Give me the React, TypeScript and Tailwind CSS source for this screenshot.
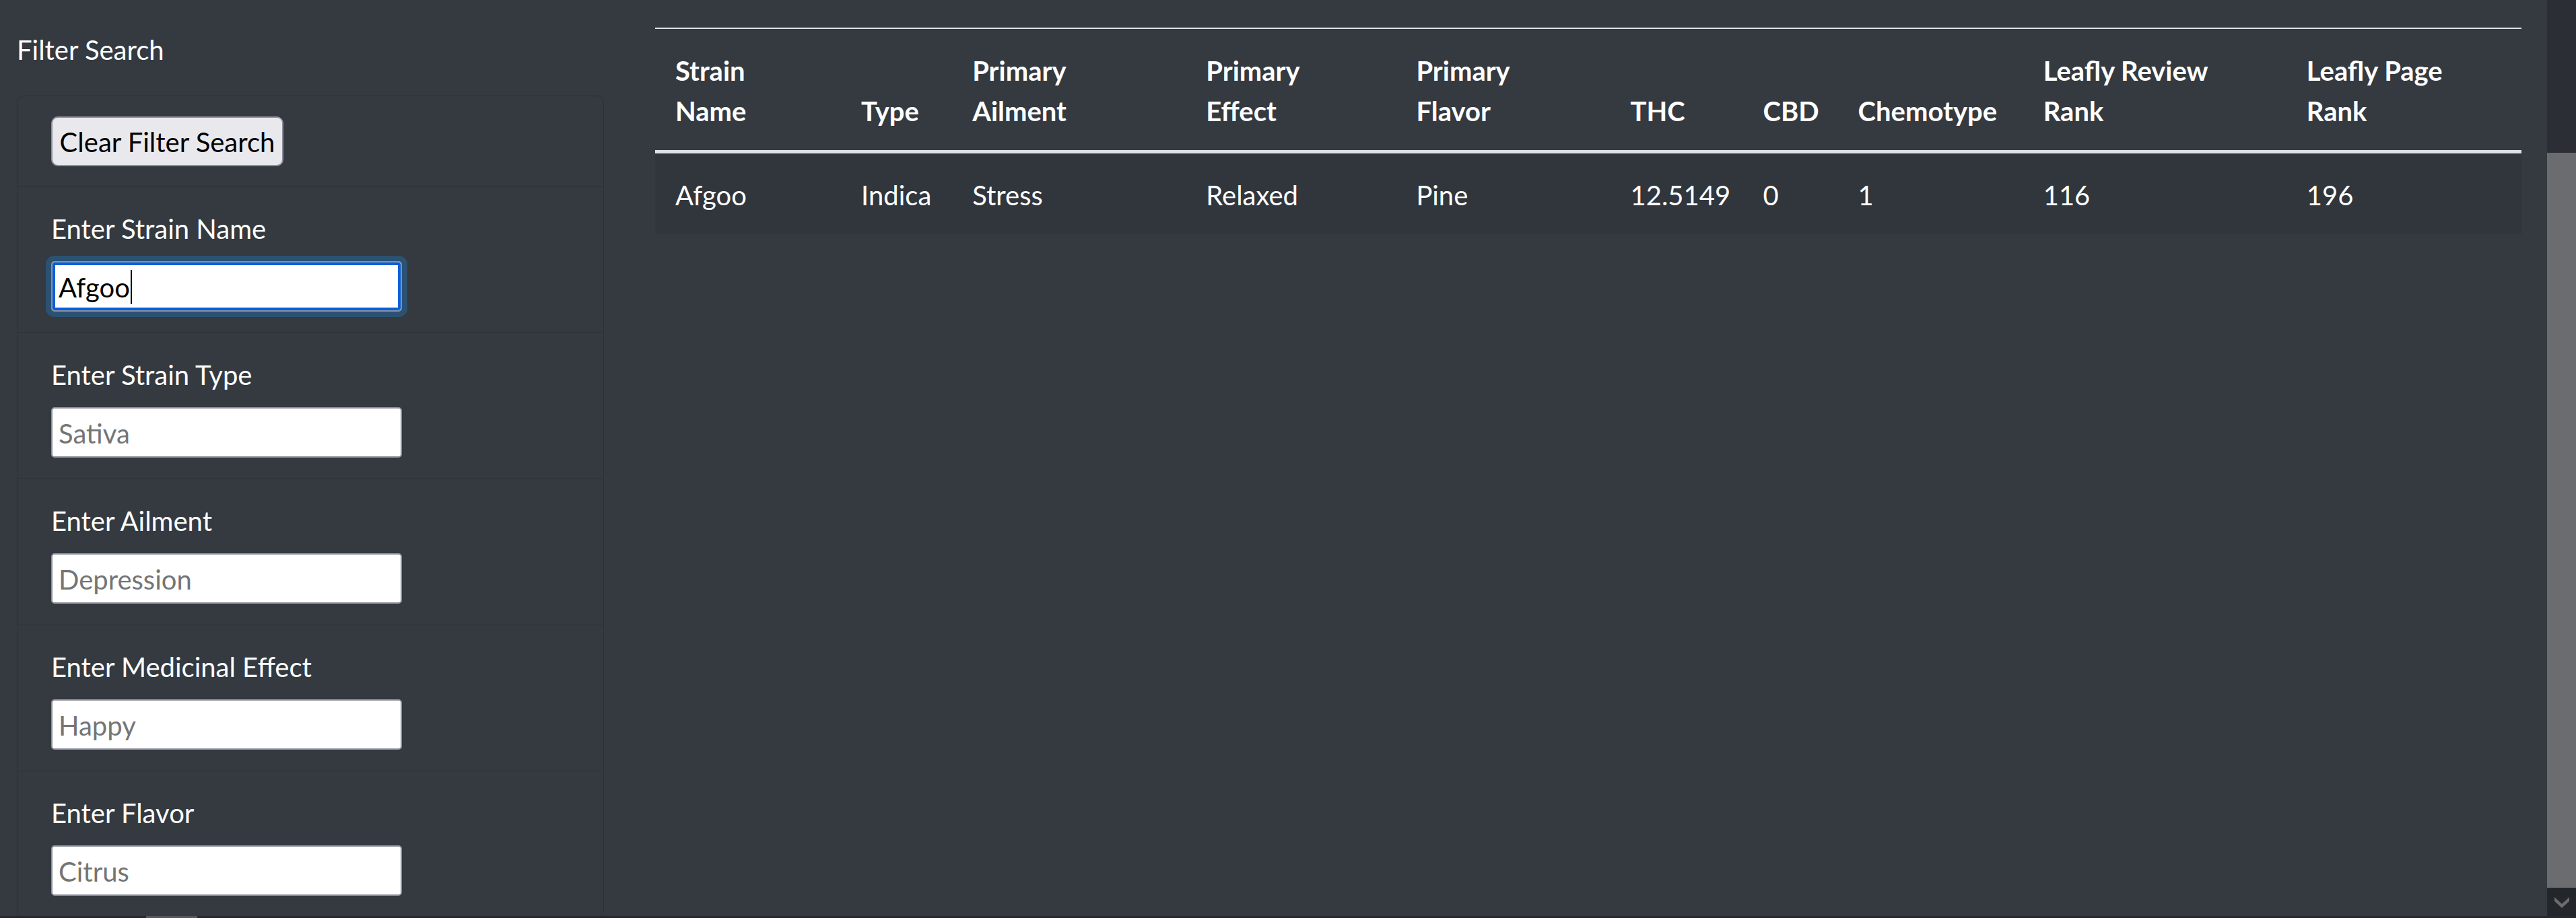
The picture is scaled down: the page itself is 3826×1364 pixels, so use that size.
import React from "react";

const fields = [
  { label: "Enter Strain Name", placeholder: "", value: "Afgoo", focused: true },
  { label: "Enter Strain Type", placeholder: "Sativa" },
  { label: "Enter Ailment", placeholder: "Depression" },
  { label: "Enter Medicinal Effect", placeholder: "Happy" },
  { label: "Enter Flavor", placeholder: "Citrus" },
];

const cols = [
  { w: 276, h: ["Strain", "Name"], v: "Afgoo" },
  { w: 165, h: ["Type"], v: "Indica" },
  { w: 347, h: ["Primary", "Ailment"], v: "Stress" },
  { w: 312, h: ["Primary", "Effect"], v: "Relaxed" },
  { w: 318, h: ["Primary", "Flavor"], v: "Pine" },
  { w: 197, h: ["THC"], v: "12.5149" },
  { w: 141, h: ["CBD"], v: "0" },
  { w: 275, h: ["Chemotype"], v: "1" },
  { w: 391, h: ["Leafly Review", "Rank"], v: "116" },
  { w: 349, h: ["Leafly Page", "Rank"], v: "196" },
];

export default function App() {
  return (
    <div
      className="w-full h-[1364px] overflow-hidden bg-[#343a40] text-white flex flex-col"
      style={{ fontFamily: '"Segoe UI", Lato, "Open Sans", sans-serif' }}
    >
      <div className="h-[1361px] flex">
        <div className="flex-1 flex min-w-0">
          {/* Left filter panel */}
          <div className="w-[897px] pl-[25px] pt-[44px] flex flex-col shrink-0">
            <div className="h-[60px] leading-[60px] text-[40px] mb-[38px]">Filter Search</div>
            <div className="w-[872px] border border-[#2c3136] rounded-[10px] flex flex-col">
              <div className="pt-[30px] pb-[30px] px-[50px] border-b border-[#2c3136]">
                <button className="w-[345px] h-[74px] bg-[#e9e9ed] border-2 border-[#8f8f9d] rounded-[10px] text-black text-[40px] leading-[60px] flex items-center justify-center pt-[2px]">
                  Clear Filter Search
                </button>
              </div>
              {fields.map((f, i) => (
                <div
                  key={f.label}
                  className={
                    "pt-[32px] pb-[31px] px-[50px] " +
                    (i < fields.length - 1 ? "border-b border-[#2c3136]" : "")
                  }
                >
                  <div className="text-[40px] leading-[60px] mb-[18px]">{f.label}</div>
                  {f.focused ? (
                    <div className="w-[521px] h-[75px] bg-white border-2 border-[#8f8f9d] rounded-[5px] shadow-[0_0_0_8px_#2b5272,inset_0_0_0_4px_#0060df] px-[9px] pt-[2px] flex items-center text-black text-[40px]">
                      <span>{f.value}</span>
                      <span className="w-[2px] h-[51px] bg-black ml-[1px]" />
                    </div>
                  ) : (
                    <input
                      readOnly
                      placeholder={f.placeholder}
                      className="w-[521px] h-[75px] bg-white border-2 border-[#8f8f9d] rounded-[5px] px-[9px] pt-[3px] text-black text-[40px] placeholder:text-[#757575] outline-none"
                      style={{ fontFamily: '"Segoe UI", Lato, "Open Sans", sans-serif' }}
                    />
                  )}
                </div>
              ))}
            </div>
          </div>

          {/* Table */}
          <div className="flex-1 pl-[76px] pr-[38px] pt-[41px] min-w-0">
            <table className="w-[2772px] table-fixed border-separate border-spacing-0 text-[40px] leading-[60px]">
              <colgroup>
                {cols.map((c) => (
                  <col key={c.h.join(" ")} style={{ width: c.w }} />
                ))}
              </colgroup>
              <thead>
                <tr>
                  {cols.map((c) => (
                    <th
                      key={c.h.join(" ")}
                      className="text-left align-bottom font-bold px-[30px] pt-[32px] pb-[28px] border-t-2 border-b-[5px] border-[#dee2e6] whitespace-nowrap"
                    >
                      {c.h.map((line, i) => (
                        <div key={i}>{line}</div>
                      ))}
                    </th>
                  ))}
                </tr>
              </thead>
              <tbody>
                <tr className="bg-[#31363c]">
                  {cols.map((c) => (
                    <td key={c.h.join(" ")} className="px-[30px] pt-[32px] pb-[28px] align-top whitespace-nowrap">
                      {c.v}
                    </td>
                  ))}
                </tr>
              </tbody>
            </table>
          </div>
        </div>

        {/* Vertical scrollbar */}
        <div className="w-[43px] shrink-0 flex flex-col bg-[#2b2f35]">
          <div className="h-[227px]" />
          <div className="h-[1092px] bg-[#6b6c70]" />
          <div className="flex-1 bg-[#23262b] flex items-center justify-center">
            <svg width="22" height="18" viewBox="0 0 22 18">
              <path d="M0 2 L11 12 L22 2 L22 8 L11 18 L0 8 Z" fill="#6b6c70" />
            </svg>
          </div>
        </div>
      </div>

      {/* Bottom horizontal scrollbar strip */}
      <div className="h-[3px] bg-[#25282d] flex">
        <div className="w-[217px]" />
        <div className="w-[76px] bg-[#55585d]" />
      </div>
    </div>
  );
}
